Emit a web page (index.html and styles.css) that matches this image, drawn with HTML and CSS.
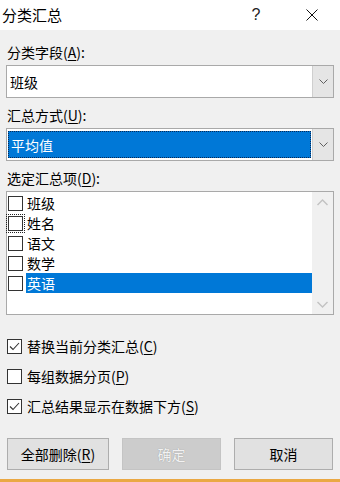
FILE: index.html
```html
<!DOCTYPE html>
<html lang="zh-CN">
<head>
<meta charset="utf-8">
<title>分类汇总</title>
<link rel="stylesheet" href="styles.css">
</head>
<body>
<div class="titlebar">
  <div class="title">分类汇总</div>
  <div class="tb-btn help">?</div>
  <div class="tb-btn close">
    <svg width="12" height="12" viewBox="0 0 12 12"><path d="M0.5 0.5 L11.5 11.5 M11.5 0.5 L0.5 11.5" stroke="#111" stroke-width="1" fill="none"/></svg>
  </div>
</div>
<div class="content">
  <div class="label first">分类字段(<u>A</u>):</div>
  <div class="combo">
    <div class="combo-text">班级</div>
    <div class="combo-btn"><svg width="9" height="6" viewBox="0 0 9 6"><path d="M0.5 0.5 L4.5 4.5 L8.5 0.5" stroke="#606060" fill="none"/></svg></div>
  </div>

  <div class="label">汇总方式(<u>U</u>):</div>
  <div class="combo">
    <div class="combo-text"><span class="combo-sel">平均值</span></div>
    <div class="combo-btn"><svg width="9" height="6" viewBox="0 0 9 6"><path d="M0.5 0.5 L4.5 4.5 L8.5 0.5" stroke="#606060" fill="none"/></svg></div>
  </div>

  <div class="label">选定汇总项(<u>D</u>):</div>
  <div class="list">
    <div class="items">
      <div class="item"><span class="box"></span><span class="item-text">班级</span></div>
      <div class="item"><span class="box focus"></span><span class="item-text">姓名</span></div>
      <div class="item"><span class="box"></span><span class="item-text">语文</span></div>
      <div class="item"><span class="box"></span><span class="item-text">数学</span></div>
      <div class="item"><span class="box"></span><span class="item-text selected">英语</span></div>
    </div>
    <div class="scrollbar">
      <div class="arrow"><svg width="11" height="7" viewBox="0 0 11 7"><path d="M0.5 6 L5.5 1 L10.5 6" stroke="#c2c2c2" stroke-width="1.4" fill="none"/></svg></div>
      <div class="arrow"><svg width="11" height="7" viewBox="0 0 11 7"><path d="M0.5 1 L5.5 6 L10.5 1" stroke="#c2c2c2" stroke-width="1.4" fill="none"/></svg></div>
    </div>
  </div>

  <div class="opts">
    <div class="opt"><span class="box checked"><svg width="13" height="13" viewBox="0 0 13 13"><path d="M2 6.5 L5 9.5 L11 3" stroke="#333" stroke-width="1.1" fill="none"/></svg></span>替换当前分类汇总(<u>C</u>)</div>
    <div class="opt"><span class="box"></span>每组数据分页(<u>P</u>)</div>
    <div class="opt"><span class="box checked"><svg width="13" height="13" viewBox="0 0 13 13"><path d="M2 6.5 L5 9.5 L11 3" stroke="#333" stroke-width="1.1" fill="none"/></svg></span>汇总结果显示在数据下方(<u>S</u>)</div>
  </div>

  <div class="buttons">
    <div class="btn b1">全部删除(<u>R</u>)</div>
    <div class="btn b2 disabled">确定</div>
    <div class="btn b3">取消</div>
  </div>
</div>
<div class="bottom-line"></div>
</body>
</html>
```
FILE: styles.css
```css
* { box-sizing: border-box; }
html, body { margin: 0; padding: 0; }
body {
  width: 340px;
  height: 482px;
  overflow: hidden;
  background: #f0f0f0;
  font-family: "Noto Sans CJK SC", "Noto Sans", sans-serif;
  font-size: 14px;
  color: #000;
  display: flex;
  flex-direction: column;
}
u { text-decoration: underline; text-underline-offset: 2px; }

.titlebar {
  height: 30px;
  background: #fff;
  display: flex;
  align-items: center;
}
.title {
  flex: 1;
  padding-left: 2px;
  font-size: 15px;
  line-height: 30px;
}
.tb-btn {
  width: 56px;
  height: 30px;
  display: flex;
  align-items: center;
  justify-content: center;
}
.help {
  font-family: "Liberation Sans", sans-serif;
  font-size: 16px;
  color: #222;
  padding-bottom: 1px;
}

.content {
  padding: 0 6px;
  display: flex;
  flex-direction: column;
}
.label {
  line-height: 20px;
  margin-top: 7px;
  padding-left: 1px;
}
.label.first { margin-top: 12px; }

.combo {
  margin-top: 3px;
  height: 33px;
  border: 1px solid #a9a9a9;
  background: #fff;
  display: flex;
}
.combo-text {
  flex: 1;
  display: flex;
  align-items: center;
  padding-left: 3px;
  line-height: 20px;
}
.combo-sel {
  display: flex;
  align-items: center;
  align-self: stretch;
  flex: 1;
  margin: 2px 1px 2px -2px;
  padding-left: 2px;
  background: #0078d7;
  color: #fff;
  border: 1px dotted #0a2a55;
}
.combo-btn {
  width: 21px;
  background: #e5e5e5;
  border-left: 1px solid #cfcfcf;
  display: flex;
  align-items: center;
  justify-content: center;
}

.list {
  margin-top: 3px;
  height: 124px;
  border: 1px solid #a9a9a9;
  background: #fff;
  display: flex;
}
.items {
  flex: 1;
  padding-top: 1px;
}
.item {
  height: 20px;
  display: flex;
  align-items: center;
  padding-left: 1px;
}
.box {
  width: 15px;
  height: 15px;
  border: 1px solid #333;
  background: #fff;
  flex: none;
  display: flex;
  align-items: center;
  justify-content: center;
}
.item .box { margin-right: 3px; }
.box.focus { outline: 1px dotted #222; outline-offset: 1px; }
.item-text {
  flex: 1;
  height: 20px;
  line-height: 20px;
  padding-left: 1px;
}
.item-text.selected {
  background: #0078d7;
  color: #fff;
}
.scrollbar {
  width: 21px;
  background: #f0f0f0;
  display: flex;
  flex-direction: column;
  justify-content: space-between;
}
.arrow {
  height: 20px;
  display: flex;
  align-items: center;
  justify-content: center;
}

.opts {
  margin-top: 21px;
  display: flex;
  flex-direction: column;
  gap: 10px;
  padding-left: 1px;
}
.opt {
  height: 20px;
  line-height: 20px;
  display: flex;
  align-items: center;
}
.opt .box { margin-right: 5px; }

.buttons {
  margin-top: 22px;
  padding: 0 1px;
  display: flex;
  gap: 13px;
}
.btn {
  height: 32px;
  background: #e1e1e1;
  border: 1px solid #adadad;
  display: flex;
  align-items: center;
  justify-content: center;
}
.b1 { width: 102px; }
.b2, .b3 { width: 99px; }
.btn.disabled {
  background: #cccccc;
  border-color: #c4c4c4;
  color: #f2f2f2;
  text-shadow: 0 0 1px #8f8f8f;
}

.bottom-line {
  margin-top: auto;
  height: 3px;
  background: #eaa844;
}
```
